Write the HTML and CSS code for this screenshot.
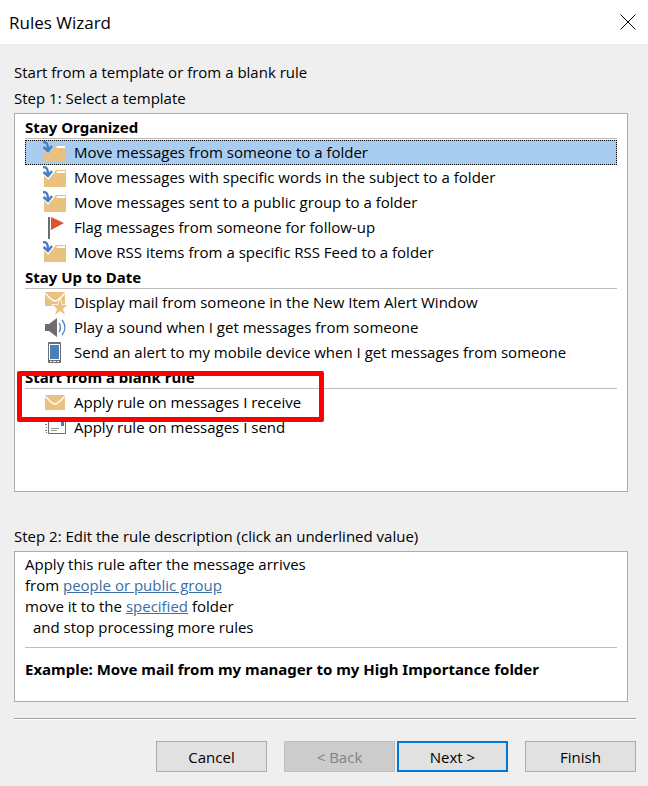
FILE: index.html
```
<!DOCTYPE html>
<html lang="en">
<head>
    <meta charset="UTF-8">
    <meta name="viewport" content="width=device-width, initial-scale=1.0">
    <title>Rules Wizard</title>
    <link rel="stylesheet" href="styles.css">
</head>
<body>
    <!-- Shared icons -->
    <svg class="sprite" aria-hidden="true">
        <symbol id="icon-folder" viewBox="0 0 24 24">
            <path d="M2 9h8l4-5h10v17H2z" fill="#e9c282"/>
            <path d="M14 7l1.500-2H23v2z" fill="#fff"/>
            <path d="M1 2c4 0 5 2 5 7M2 6l4 4 4-5" fill="none" stroke="#fff" stroke-width="5"/>
            <path d="M1 1c4 0 5 2 5 8" fill="none" stroke="#4a7ebb" stroke-width="2.400"/>
            <path d="M1.500 6L6 10l4-5" fill="none" stroke="#4a7ebb" stroke-width="2.400"/>
        </symbol>
        <symbol id="icon-folder-selected" viewBox="0 0 24 24">
            <path d="M2 9h8l4-5h10v17H2z" fill="#e9c282"/>
            <path d="M14 7l1.500-2H23v2z" fill="#fff"/>
            <path d="M1 2c4 0 5 2 5 7M2 6l4 4 4-5" fill="none" stroke="#a9cdf1" stroke-width="5"/>
            <path d="M1 1c4 0 5 2 5 8" fill="none" stroke="#4a7ebb" stroke-width="2.400"/>
            <path d="M1.500 6L6 10l4-5" fill="none" stroke="#4a7ebb" stroke-width="2.400"/>
        </symbol>
    </svg>

    <div class="dialog">
        <div class="title-bar">
            <h1>Rules Wizard</h1>
            <button type="button" class="close" aria-label="Close">
                <svg width="16" height="16" viewBox="0 0 16 16"><path d="M.5.5l15 15M15.5.5l-15 15" stroke="#000" stroke-width="1"/></svg>
            </button>
        </div>

        <form class="content">
            <p class="label">Start from a template or from a blank rule</p>
            <p class="label" id="step-1">Step 1: Select a template</p>

            <div class="panel templates" role="radiogroup" aria-labelledby="step-1">
                <h2>Stay Organized</h2>
                <label class="template">
                    <input type="radio" name="template" checked>
                    <svg class="icon"><use href="#icon-folder-selected"/></svg>
                    Move messages from someone to a folder
                </label>
                <label class="template">
                    <input type="radio" name="template">
                    <svg class="icon"><use href="#icon-folder"/></svg>
                    Move messages with specific words in the subject to a folder
                </label>
                <label class="template">
                    <input type="radio" name="template">
                    <svg class="icon"><use href="#icon-folder"/></svg>
                    Move messages sent to a public group to a folder
                </label>
                <label class="template">
                    <input type="radio" name="template">
                    <svg class="icon" viewBox="0 0 24 24">
                        <path d="M6 1h2v22H6z" fill="#6d6d6d"/>
                        <path d="M9 1l13 6-13 7z" fill="#d9532c"/>
                    </svg>
                    Flag messages from someone for follow-up
                </label>
                <label class="template">
                    <input type="radio" name="template">
                    <svg class="icon"><use href="#icon-folder"/></svg>
                    Move RSS items from a specific RSS Feed to a folder
                </label>

                <h2>Stay Up to Date</h2>
                <label class="template">
                    <input type="radio" name="template">
                    <svg class="icon" viewBox="0 0 24 24">
                        <path d="M3 1h20v14H3z" fill="#e9c282"/>
                        <path d="M3 2c4 4 7 8 10 8s6-4 10-8" fill="none" stroke="#fff" stroke-width="1.300"/>
                        <path d="M18 8l2 6h5l-4 4 2 6-5-4-5 4 2-6-4-4h5z" fill="#e9c282" stroke="#fff" stroke-width="1.500" paint-order="stroke"/>
                    </svg>
                    Display mail from someone in the New Item Alert Window
                </label>
                <label class="template">
                    <input type="radio" name="template">
                    <svg class="icon" viewBox="0 0 24 24">
                        <path d="M3 8h4l8-6v19l-8-6H3z" fill="#6d6d6d"/>
                        <path d="M17 7c2 3 2 6 0 9M20 4c4 5 4 10 0 15" fill="none" stroke="#4a7ebb" stroke-width="1.300"/>
                    </svg>
                    Play a sound when I get messages from someone
                </label>
                <label class="template">
                    <input type="radio" name="template">
                    <svg class="icon" viewBox="0 0 24 24">
                        <rect x="6" y="1" width="13" height="21" rx="1" fill="#6d6d6d"/>
                        <path d="M7 3h11v16H7z" fill="#fff"/>
                        <path d="M8 4h9v14H8z" fill="#4a7ebb"/>
                        <path d="M8 20h2v1H8zM11 20h3v1h-3zM15 20h2v1h-2z" fill="#fff"/>
                    </svg>
                    Send an alert to my mobile device when I get messages from someone
                </label>

                <h2>Start from a blank rule</h2>
                <label class="template highlighted">
                    <input type="radio" name="template">
                    <svg class="icon" viewBox="0 0 24 24">
                        <path d="M3 4h20v15H3z" fill="#e9c282"/>
                        <path d="M3 5c4 4 7 8 10 8s6-4 10-8" fill="none" stroke="#fff" stroke-width="1.300"/>
                    </svg>
                    Apply rule on messages I receive
                </label>
                <label class="template">
                    <input type="radio" name="template">
                    <svg class="icon" viewBox="0 0 24 24">
                        <path d="M6.500 4.500h17v13h-17z" fill="#fff" stroke="#6d6d6d"/>
                        <path d="M9 12.500h8M9 14.500h6" stroke="#999"/>
                        <path d="M19 6h3v4h-3z" fill="#4a7ebb"/>
                        <path d="M3 8.500h2M4 11.500h1M3 14.500h2M4 16.500h1" stroke="#6d6d6d"/>
                    </svg>
                    Apply rule on messages I send
                </label>
            </div>

            <p class="label step-2">Step 2: Edit the rule description (click an underlined value)</p>
            <div class="panel description">
                <p>Apply this rule after the message arrives</p>
                <p>from <a href="#">people or public group</a></p>
                <p>move it to the <a href="#">specified</a> folder</p>
                <p class="indent">and stop processing more rules</p>
                <p class="example">Example: Move mail from my manager to my High Importance folder</p>
            </div>
        </form>

        <div class="buttons">
            <button type="button">Cancel</button>
            <div class="pager">
                <button type="button" disabled>&lt; Back</button>
                <button type="button" class="default">Next &gt;</button>
            </div>
            <button type="button">Finish</button>
        </div>
    </div>
</body>
</html>
```
FILE: styles.css
```
*, *::after {
    box-sizing: border-box;
}
body {
    margin: 0;
    background-color: #efefef;
    color: #000;
    font-family: 'Open Sans', 'Segoe UI', sans-serif;
    font-size: 15px;
    line-height: 21px;
}
h1, h2, p {
    margin: 0;
}
.sprite {
    display: none;
}
.dialog {
    display: flex;
    flex-direction: column;
    min-height: 100vh;
}
.title-bar {
    display: flex;
    align-items: center;
    justify-content: space-between;
    height: 44px;
    padding: 0 12px 0 9px;
    background-color: #fff;
}
.title-bar h1 {
    font-size: 17px;
    font-weight: 400;
}
.close {
    display: flex;
    padding: 0;
    border: none;
    background: none;
}
.content {
    display: flex;
    flex: 1;
    flex-direction: column;
    padding: 15px 20px 16px 14px;
}
.label {
    line-height: 26px;
}
.panel {
    margin-top: 2px;
    padding: 1px 10px;
    border: 1px solid #acacac;
    background-color: #fff;
}
.templates {
    flex: 1;
}
.templates h2 {
    height: 24px;
    margin-bottom: 1px;
    border-bottom: 1px solid #bdbdbd;
    font-family: 'Noto Sans', 'Segoe UI', sans-serif;
    font-size: 15px;
    font-weight: 700;
    line-height: 25px;
}
.template {
    display: flex;
    position: relative;
    align-items: center;
    gap: 8px;
    height: 25px;
    padding-left: 17px;
    line-height: 27px;
    white-space: nowrap;
}
.template input {
    position: absolute;
    opacity: 0;
}
.template:has(:checked) {
    outline: 1px dotted #000;
    outline-offset: -1px;
    background-color: #a9cdf1;
}
.icon {
    flex: none;
    width: 24px;
    height: 24px;
    overflow: visible;
}
.highlighted::after {
    content: '';
    position: absolute;
    z-index: 1;
    top: -19px;
    bottom: -7px;
    left: -8px;
    width: 307px;
    border: 5px solid #fe0000;
    border-radius: 2px;
}
.step-2 {
    margin-top: 31px;
}
.description {
    min-height: 151px;
    padding-top: 2px;
}
.description a {
    color: #3a6ea5;
}
.indent {
    padding-left: 8px;
}
.description .example {
    margin-top: 9px;
    padding-top: 11px;
    border-top: 1px solid #bdbdbd;
    font-family: 'Noto Sans', 'Segoe UI', sans-serif;
    font-weight: 700;
}
.buttons {
    display: flex;
    justify-content: flex-end;
    gap: 17px;
    margin: 0 12px 0 14px;
    padding: 22px 0 14px;
    border-top: 1px solid #a0a0a0;
    box-shadow: inset 0 1px #fff;
}
.pager {
    display: flex;
    gap: 2px;
}
.buttons button {
    width: 111px;
    height: 31px;
    padding: 2px 0 0;
    border: 1px solid #adadad;
    background-color: #e1e1e1;
    color: #000;
    font: inherit;
}
.buttons button:disabled {
    border-color: #bfbfbf;
    background-color: #ccc;
    color: #838383;
}
.buttons .default {
    border: 2px solid #0078d7;
}
```
